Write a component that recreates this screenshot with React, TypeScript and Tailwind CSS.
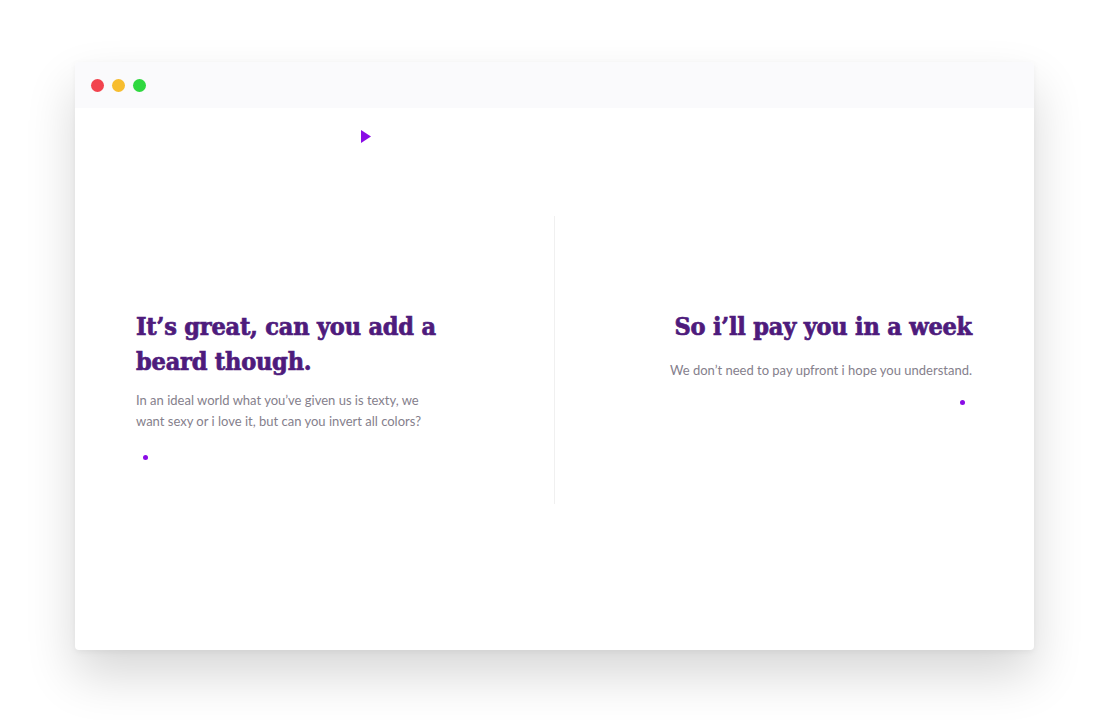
const Dot = () => <div className="h-[5px] w-[5px] rounded-full bg-[#8a0ce6]" />

const headFont = { fontFamily: '"DejaVu Serif Condensed", "DejaVu Serif", serif' }

export default function App() {
  return (
    <div className="min-h-screen w-full bg-white pt-[62px]">
      <div className="ml-[75px] w-[959px] h-[588px] overflow-hidden rounded-[4px] bg-white shadow-[0_25px_50px_rgba(0,0,0,0.16),0_2px_6px_rgba(0,0,0,0.05)] flex flex-col">
        {/* title bar */}
        <div className="flex h-[46px] shrink-0 items-center gap-[8px] bg-[#fafafc] pl-[16px]">
          <span className="h-[13px] w-[13px] rounded-full bg-[#f2434e]" />
          <span className="h-[13px] w-[13px] rounded-full bg-[#f7bd2f]" />
          <span className="h-[13px] w-[13px] rounded-full bg-[#2fd83f]" />
        </div>

        <div className="flex h-[108px] shrink-0 pl-[285px] pt-[21px]">
          <svg width="12" height="15" viewBox="0 0 12 15">
            <path d="M1 1 L11 7.5 L1 14 Z" fill="#8a0ce6" />
          </svg>
        </div>

        <div className="flex h-[288px]" style={{ fontFamily: 'Lato, "Open Sans", sans-serif' }}>
          <div className="flex-1 pl-[61px] pt-[93px]">
            <h1 className="text-[25px] leading-[35px] font-bold tracking-[-0.2px] text-[#4e1b7c] [-webkit-text-stroke:0.7px_#4e1b7c]" style={headFont}>
              It’s great, can you add a<br />beard though.
            </h1>
            <p className="mt-[11px] text-[13px] leading-[21px] text-[#85808c]">
              In an ideal world what you’ve given us is texty, we<br />want sexy or i love it, but can you invert all colors?
            </p>
            <div className="mt-[23px] pl-[7px]">
              <Dot />
            </div>
          </div>
          <div className="w-px bg-[#f0f0f0]" />
          <div className="flex flex-1 flex-col items-end pr-[62px] pt-[93px] text-right">
            <h1 className="text-[25px] leading-[35px] font-bold tracking-[-0.2px] text-[#4e1b7c] [-webkit-text-stroke:0.7px_#4e1b7c]" style={headFont}>
              So i’ll pay you in a week
            </h1>
            <p className="mt-[16px] text-[13px] leading-[21px] text-[#85808c]">
              We don’t need to pay upfront i hope you understand.
            </p>
            <div className="mt-[19px] pr-[7px]">
              <Dot />
            </div>
          </div>
        </div>
      </div>
    </div>
  )
}
